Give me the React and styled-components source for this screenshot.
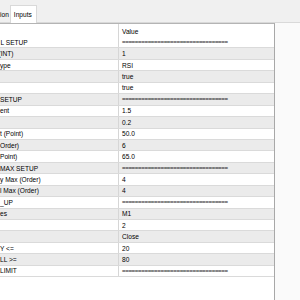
import React from 'react'
import styled, { createGlobalStyle } from 'styled-components'

const Global = createGlobalStyle`
  html, body { margin: 0; padding: 0; background: #fff; }
  body { font-family: "Liberation Sans", Arial, sans-serif; }
`

const Window = styled.div`
  width: 300px;
  height: 300px;
  display: flex;
  flex-direction: column;
  overflow: hidden;
  background: #fff;
`
const TabBar = styled.div`
  height: 22px;
  flex: none;
  display: flex;
  align-items: flex-end;
  background: #f0f0f0;
  border-bottom: 1px solid #d9d9d9;
`
const Tab = styled.div`
  height: ${p => (p.active ? '18px' : '15px')};
  margin-bottom: ${p => (p.active ? '-1px' : '0')};
  padding: ${p => (p.active ? '0 4px 0 3px' : '0 1px 0 0')};
  display: flex;
  align-items: center;
  font-size: 6.6px;
  color: #000;
  background: ${p => (p.active ? '#fff' : 'transparent')};
  border: ${p => (p.active ? '1px solid #d9d9d9' : 'none')};
  border-bottom: none;
  box-sizing: border-box;
`
const Body = styled.div`
  flex: 1;
  display: flex;
  background: #fff;
`
const Grid = styled.div`
  width: 275px;
  border-top: 1px solid #b4b4b4;
  border-right: 1px solid #a8a8a8;
  box-sizing: border-box;
  display: flex;
  flex-direction: column;
  font-size: 6.6px;
  color: #000;
`
const Row = styled.div`
  display: flex;
  height: ${p => (p.header ? '13px' : '11.45px')};
  flex: none;
  background: ${p => (p.shade ? '#ebebeb' : '#fff')};
  border-bottom: ${p => (p.header ? 'none' : '1px solid #dadada')};
  box-sizing: border-box;
`
const NameCell = styled.div`
  width: 118px;
  flex: none;
  border-right: 1px solid #d6d6d6;
  overflow: hidden;
  white-space: nowrap;
  display: flex;
  align-items: center;
`
const NameText = styled.span`
  display: block;
  width: 118px;
  text-indent: ${p => p.shift}px;
`
const ValueCell = styled.div`
  flex: 1;
  padding-left: 3px;
  display: flex;
  align-items: ${p => (p.header ? 'flex-end' : 'center')};
  padding-bottom: ${p => (p.header ? '2px' : '0')};
  white-space: nowrap;
  overflow: hidden;
`
const Separator = styled.span`
  font-size: 6px;
  font-weight: bold;
  letter-spacing: -0.3px;
  color: #1a1a1a;
`
const Filler = styled.div`
  flex: 1;
  background: #fafafa;
`

const SEP = '='.repeat(33)

const rows = [
  ['L SETUP', 0.5, SEP],
  ['(INT)', -1.5, '1'],
  ['ype', 0, 'RSI'],
  ['', 0, 'true'],
  ['', 0, 'true'],
  ['SETUP', 0, SEP],
  ['ent', 0, '1.5'],
  ['', 0, '0.2'],
  ['t (Point)', 0, '50.0'],
  ['Order)', 0, '6'],
  ['Point)', 0, '65.0'],
  ['MAX SETUP', 0, SEP],
  ['y Max (Order)', 0, '4'],
  ['l Max (Order)', 0, '4'],
  ['_UP', 0, SEP],
  ['es', 0, 'M1'],
  ['', 0, '2'],
  ['', 0, 'Close'],
  ['Y <=', 0, '20'],
  ['LL >=', 0, '80'],
  ['LIMIT', 0, SEP],
]

export default function App() {
  return (
    <Window>
      <Global />
      <TabBar>
        <Tab>ion</Tab>
        <Tab active>Inputs</Tab>
      </TabBar>
      <Body>
        <Grid>
          <Row header>
            <NameCell />
            <ValueCell header>Value</ValueCell>
          </Row>
          {rows.map(([name, shift, value], i) => (
            <Row key={i} shade={i % 2 === 1}>
              <NameCell>
                <NameText shift={shift}>{name}</NameText>
              </NameCell>
              <ValueCell>
                {value === SEP ? <Separator>{value}</Separator> : value}
              </ValueCell>
            </Row>
          ))}
        </Grid>
        <Filler />
      </Body>
    </Window>
  )
}
